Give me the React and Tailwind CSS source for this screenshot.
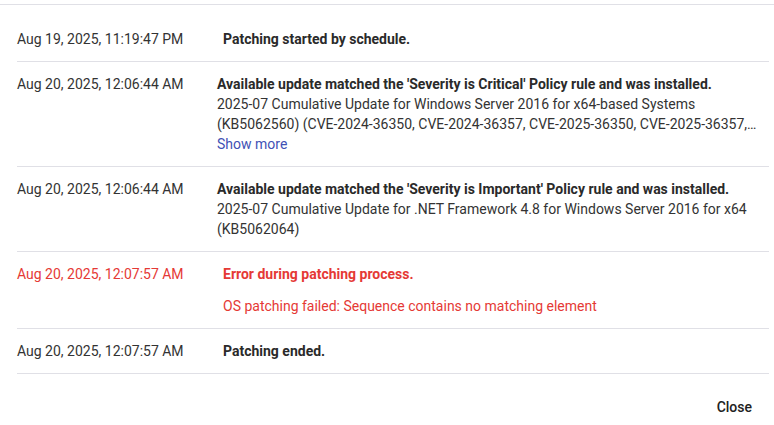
export default function App() {
  const rows = [
    { t: "Aug 19, 2025, 11:19:47 PM", title: "Patching started by schedule.", single: true },
    {
      t: "Aug 20, 2025, 12:06:44 AM",
      title: "Available update matched the 'Severity is Critical' Policy rule and was installed.",
      desc: "2025-07 Cumulative Update for Windows Server 2016 for x64-based Systems (KB5062560) (CVE-2024-36350, CVE-2024-36357, CVE-2025-36350, CVE-2025-36357, CVE-2025-47971, CVE-2025-47972, CVE-2025-47973, CVE-2025-47975)",
      clamp: true,
      more: true,
    },
    {
      t: "Aug 20, 2025, 12:06:44 AM",
      title: "Available update matched the 'Severity is Important' Policy rule and was installed.",
      desc: "2025-07 Cumulative Update for .NET Framework 4.8 for Windows Server 2016 for x64 (KB5062064)",
    },
  ];
  return (
    <div className="w-[774px] h-[425px] bg-white text-[14px] leading-[20px] text-[#212121] flex flex-col" style={{ fontFamily: "Roboto, 'Noto Sans', sans-serif" }}>
      <div className="h-[4px] shrink-0" />
      <div className="h-px bg-[#e0e0e6] shrink-0" />
      <div className="pl-[17px] pr-[5px] pt-[12px] flex flex-col">
        {rows.map((r, i) => (
          <div key={i} className="flex border-b border-[#e0e0e6] pt-[12px] pb-[12px]">
            <div className="w-[200px] shrink-0 text-[#333333]">{r.t}</div>
            <div className={"flex-1 min-w-0 " + (r.single ? "pl-[6px]" : "")}>
              <div className="font-bold text-[#2a2a2a]">{r.title}</div>
              {r.desc && (
                <div className={"text-[#333333] " + (r.clamp ? "line-clamp-2" : "")}>{r.desc}</div>
              )}
              {r.more && <div className="text-[#3f51b5]">Show more</div>}
            </div>
          </div>
        ))}
        <div className="flex border-b border-[#e0e0e6] pt-[12px] pb-[12px] text-[#e53935]">
          <div className="w-[200px] shrink-0">Aug 20, 2025, 12:07:57 AM</div>
          <div className="flex-1 pl-[6px]">
            <div className="font-bold">Error during patching process.</div>
            <div className="mt-[12px]">OS patching failed: Sequence contains no matching element</div>
          </div>
        </div>
        <div className="flex border-b border-[#e0e0e6] pt-[12px] pb-[12px]">
          <div className="w-[200px] shrink-0 text-[#333333]">Aug 20, 2025, 12:07:57 AM</div>
          <div className="flex-1 pl-[6px] font-bold text-[#2a2a2a]">Patching ended.</div>
        </div>
      </div>
      <div className="flex justify-end pr-[22px] pt-[23px]">
        <button className="text-[14px] font-medium text-[#212121] leading-[20px]">Close</button>
      </div>
    </div>
  );
}
